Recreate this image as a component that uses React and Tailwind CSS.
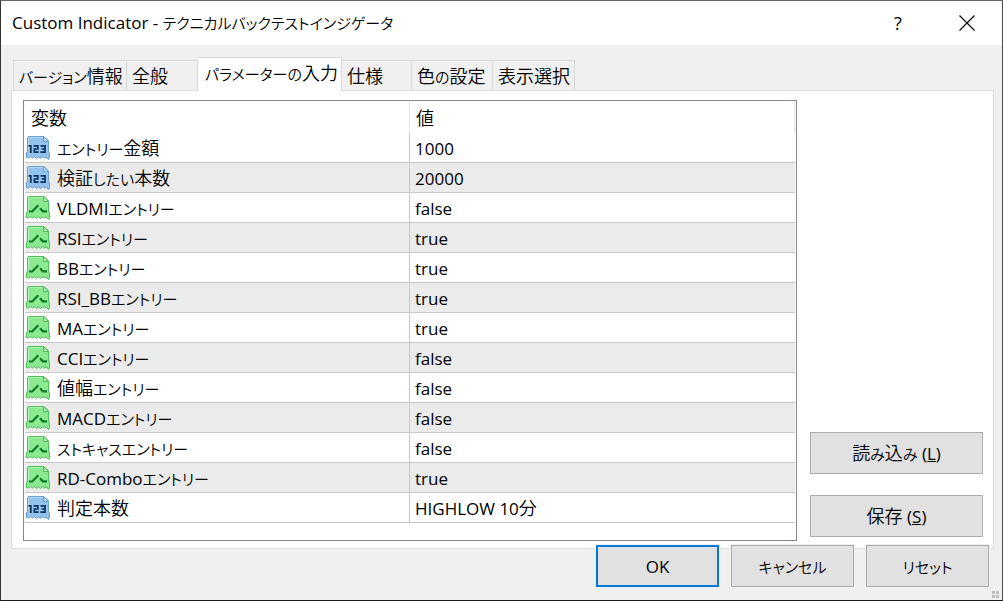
/**
 * インジケーターのプロパティダイアログ
 * タイトルバー + タブ + パラメーター表 + 操作ボタン
 */

const TABS = [
  { label: 'バージョン情報', width: 'w-[114px]' },
  { label: '全般', width: 'w-[71px]' },
  { label: 'パラメーターの入力', width: 'w-[144px]', active: true },
  { label: '仕様', width: 'w-[70px]' },
  { label: '色の設定', width: 'w-[81px]' },
  { label: '表示選択', width: 'w-[82px]' },
]

const PARAMS = [
  { type: 'number', name: 'エントリー金額', value: '1000' },
  { type: 'number', name: '検証したい本数', value: '20000' },
  { type: 'bool', name: 'VLDMIエントリー', value: 'false' },
  { type: 'bool', name: 'RSIエントリー', value: 'true' },
  { type: 'bool', name: 'BBエントリー', value: 'true' },
  { type: 'bool', name: 'RSI_BBエントリー', value: 'true' },
  { type: 'bool', name: 'MAエントリー', value: 'true' },
  { type: 'bool', name: 'CCIエントリー', value: 'false' },
  { type: 'bool', name: '値幅エントリー', value: 'false' },
  { type: 'bool', name: 'MACDエントリー', value: 'false' },
  { type: 'bool', name: 'ストキャスエントリー', value: 'false' },
  { type: 'bool', name: 'RD-Comboエントリー', value: 'true' },
  { type: 'number', name: '判定本数', value: 'HIGHLOW 10分' },
]

// かなは小さめ、漢字は大きめに組む
function Label({ text }) {
  const runs = text.match(/[ぁ-んァ-ヶー]+|[一-龠]+|[^ぁ-んァ-ヶー一-龠]+/g) || []
  return runs.map((run, i) => {
    if (/^[ぁ-んァ-ヶー]/.test(run)) return <span key={i} className="text-[15px] leading-none [font-weight:350]">{run}</span>
    if (/^[一-龠]/.test(run)) return <span key={i} className="text-[18px] leading-none [font-weight:350]">{run}</span>
    return run
  })
}

// 下端が破れた紙のアイコン（数値 = 青、真偽値 = 緑）
function ParamIcon({ type }) {
  const isNumber = type === 'number'
  const fill = isNumber ? '#93c3ec' : '#8bea90'
  const light = isNumber ? '#b9daf5' : '#b3f4b4'
  const edge = isNumber ? '#6a9fd0' : '#4fbd5b'

  return (
    <svg viewBox="0 0 24 24" className="size-6 shrink-0" aria-hidden="true">
      <path
        d="M3 .5H18L22.5 5V15L23.5 17V22L22.5 23.5L20.5 21L18.5 22L16.5 20.5L14.5 22.5L12.5 21L10.5 22.5L8.5 20.5L6.5 22L4.5 20.5L2.5 22L.5 21.5V17L1.5 15V2Q1.5.5 3 .5Z"
        fill={fill}
        stroke={edge}
      />
      <path d="M2.5 14V2.5Q2.5 1.5 3.5 1.5H16.5" fill="none" stroke={light} />
      <path d="M17.5.5V5.5H22.5Z" fill={light} stroke={edge} />
      {isNumber ? (
        <g fill="none" stroke="#08325c" strokeWidth="1.7">
          <path d="M2.5 9.8H4.8V17" />
          <path d="M7.5 9.8H11.8V13H8.4V16.2H12.6" />
          <path d="M14.6 9.8H19V16.2H14.4M15.6 13H19" />
        </g>
      ) : (
        <g fill="none" stroke="#0d7826" strokeWidth="2.2">
          <path d="M3 15.5H6.2L12.3 9.3" />
          <path d="M14 12.3L16.8 15.3H21" />
        </g>
      )}
    </svg>
  )
}

function DialogButton({ children, className = '', primary = false }) {
  return (
    <button
      type="button"
      className={`h-[42px] bg-[#e1e1e1] pt-px text-center ${
        primary ? 'border-2 border-[#0078d7]' : 'border border-[#adadad]'
      } ${className}`}
    >
      {children}
    </button>
  )
}

function TitleBar() {
  return (
    <header className="flex h-11 items-center bg-white pl-[11px] pr-3">
      <h1 className="flex-1 font-normal">
        <Label text="Custom Indicator - テクニカルバックテストインジゲータ" />
      </h1>
      <button type="button" aria-label="ヘルプ" className="h-11 w-[92px] text-[18px]">
        ?
      </button>
      <button type="button" aria-label="閉じる" className="flex h-11 w-[46px] items-center justify-center">
        <svg viewBox="0 0 16 16" className="size-4" aria-hidden="true">
          <path d="M.5.5L15.5 15.5M15.5.5L.5 15.5" stroke="#000" strokeWidth="1.1" />
        </svg>
      </button>
    </header>
  )
}

function TabList() {
  return (
    <div role="tablist" className="flex items-end pl-0.5">
      {TABS.map(tab => (
        <button
          key={tab.label}
          type="button"
          role="tab"
          aria-selected={Boolean(tab.active)}
          className={`border-t border-r border-[#d9d9d9] text-left whitespace-nowrap first:border-l ${tab.width} ${
            tab.active ? 'z-10 -mb-px h-[34px] bg-white pb-0.5 pl-[7px]' : 'h-[30px] pt-0.5 pl-[5px]'
          }`}
        >
          <Label text={tab.label} />
        </button>
      ))}
    </div>
  )
}

function ParamTable() {
  return (
    <div className="flex-1 border border-[#828790] px-px">
      <table className="w-full table-fixed border-separate border-spacing-0 text-left">
        <thead>
          <tr className="h-8">
            <th className="w-1/2 border-r border-[#e5e5e5] p-0 pt-1 pl-[6px] font-normal">
              <Label text="変数" />
            </th>
            <th className="border-r border-[#e5e5e5] p-0 pt-1 pl-[6px] font-normal">
              <Label text="値" />
            </th>
          </tr>
        </thead>
        <tbody>
          {PARAMS.map(param => (
            <tr key={param.name} className="h-[30px] even:bg-[#ebebeb]">
              <td className="border-r border-b border-[#c8c8c8] p-0 pl-px">
                <div className="flex items-center gap-[7px]">
                  <ParamIcon type={param.type} />
                  <span className="pt-0.5">
                    <Label text={param.name} />
                  </span>
                </div>
              </td>
              <td className="border-b border-[#c8c8c8] p-0 pt-0.5 pl-[5px]">
                <Label text={param.value} />
              </td>
            </tr>
          ))}
        </tbody>
      </table>
    </div>
  )
}

// 右下のサイズ変更グリップ
function ResizeGrip() {
  return (
    <div className="absolute right-[3px] bottom-[2px] grid grid-cols-2 gap-px">
      <i className="size-[3px] bg-[#bfbfbf]" />
      <i className="size-[3px] bg-[#bfbfbf]" />
      <i className="size-[3px] bg-[#bfbfbf]" />
      <i className="size-[3px] bg-[#bfbfbf]" />
    </div>
  )
}

export default function App() {
  return (
    <div className="relative flex min-h-screen flex-col border border-t-[#666666] border-r-[#4a4a4d] border-b-[#1a1a1c] border-l-[#333336] bg-[#f0f0f0] font-['Open_Sans','Noto_Sans_CJK_JP',sans-serif] text-[17px] leading-6 text-black [font-feature-settings:'palt']">
      <TitleBar />
      <main className="flex flex-1 flex-col pt-3 pr-2 pl-[10px]">
        <TabList />
        <section role="tabpanel" className="flex flex-1 gap-[13px] border border-[#dcdcdc] bg-white pt-[9px] pr-[10px] pb-[7px] pl-[11px]">
          <ParamTable />
          <div className="flex w-[173px] flex-col justify-end gap-[21px] pb-1">
            <DialogButton>
              <Label text="読み込み (" />
              <u>L</u>)
            </DialogButton>
            <DialogButton>
              <Label text="保存 (" />
              <u>S</u>)
            </DialogButton>
          </div>
        </section>
      </main>
      <footer className="z-10 -mt-1 flex justify-end gap-3 pr-[13px] pb-[13px]">
        <DialogButton primary className="w-[123px] ring-1 ring-[#f0f0f0]">OK</DialogButton>
        <DialogButton className="w-[123px] ring-1 ring-[#f0f0f0]">
          <Label text="キャンセル" />
        </DialogButton>
        <DialogButton className="w-[123px] ring-1 ring-[#f0f0f0]">
          <Label text="リセット" />
        </DialogButton>
      </footer>
      <ResizeGrip />
    </div>
  )
}
